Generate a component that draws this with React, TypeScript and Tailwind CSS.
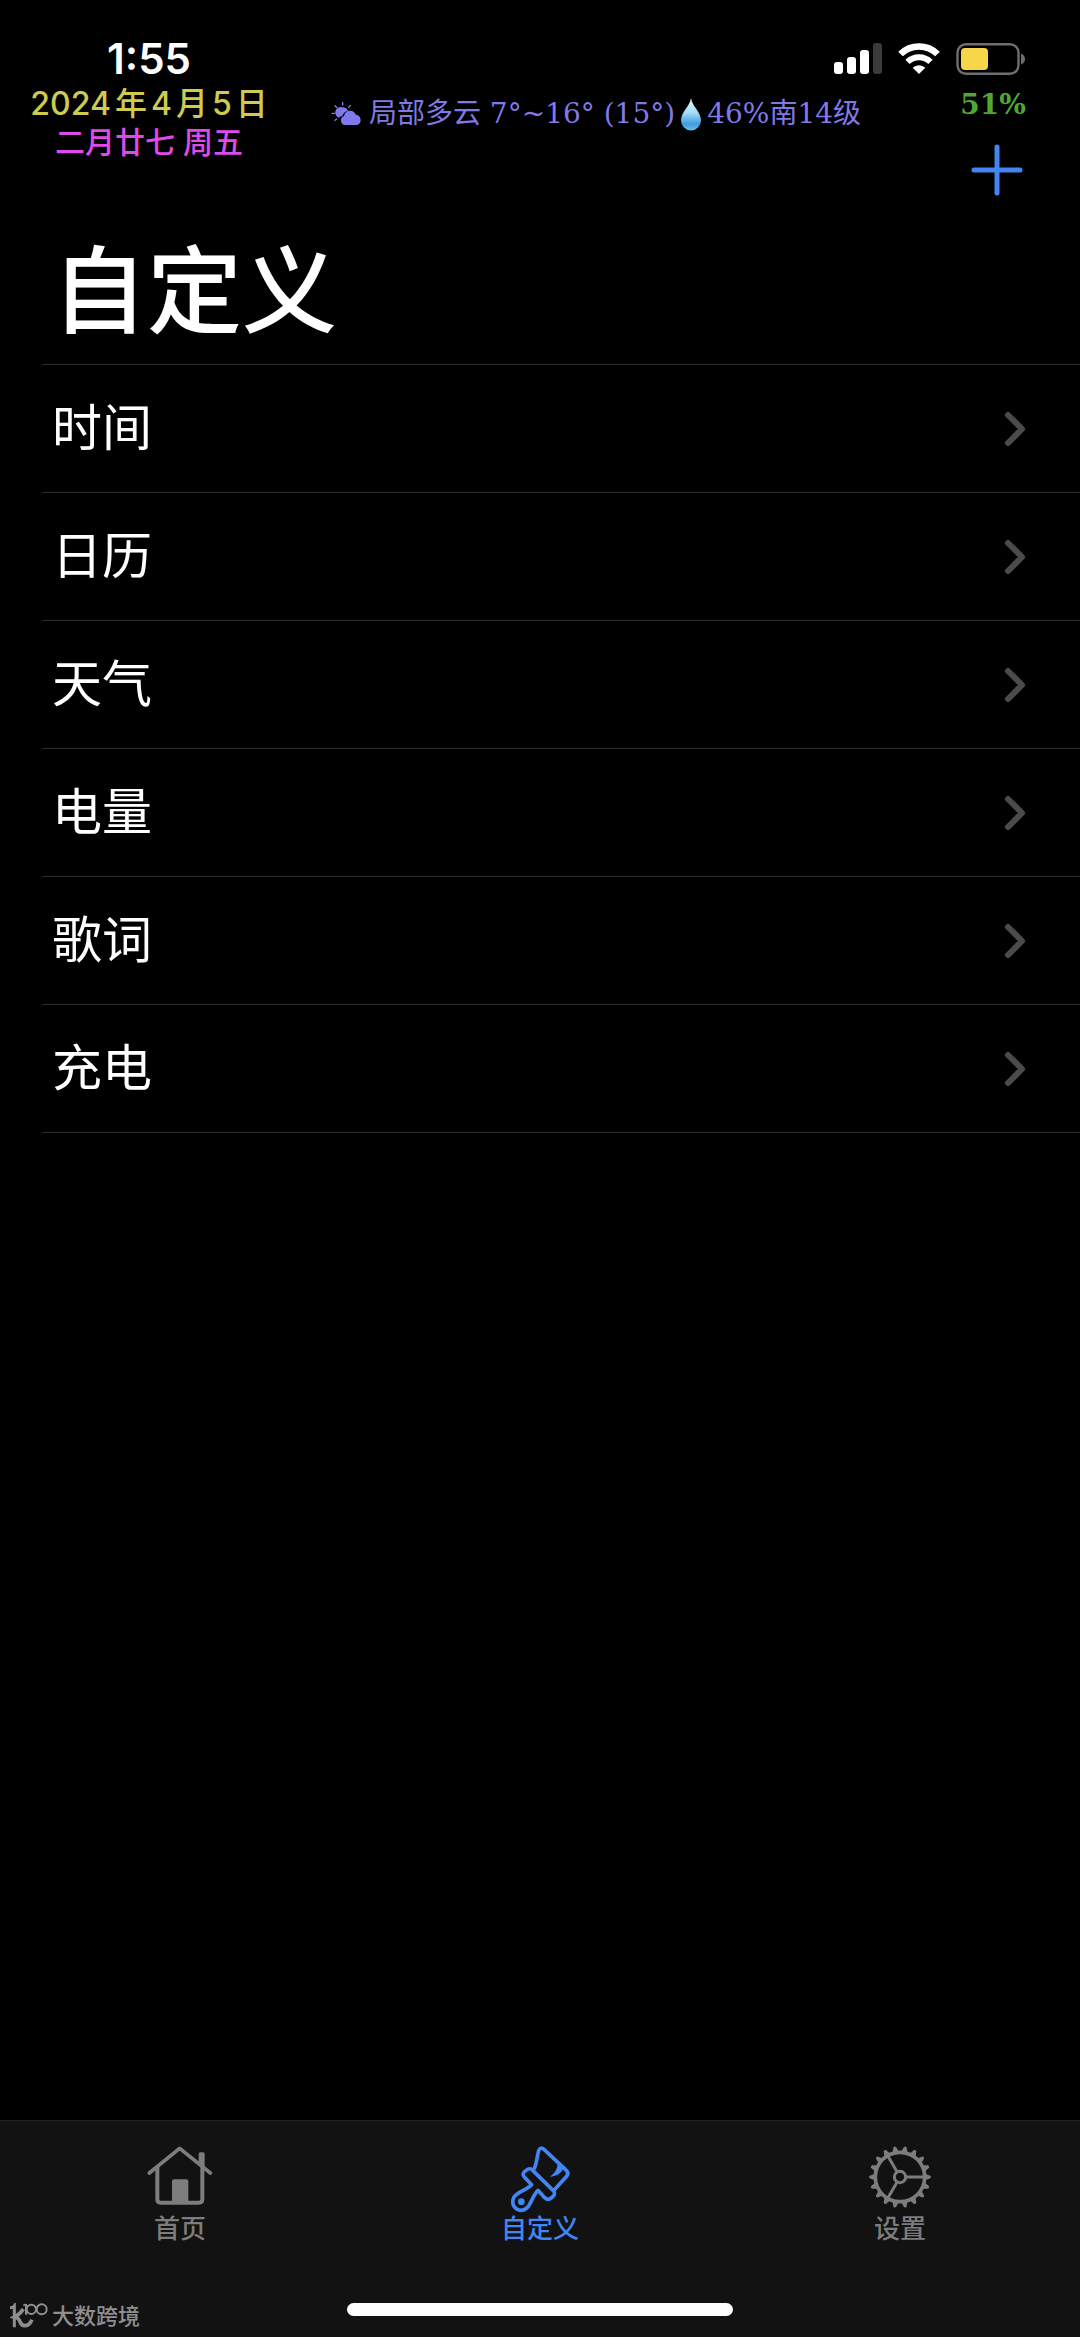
import { Fragment } from 'react'

const items = ['时间', '日历', '天气', '电量', '歌词', '充电']

const gearTeeth = Array.from({ length: 18 }, (_, i) => i * 20)

function SignalIcon() {
  return (
    <svg width="48" height="32" viewBox="0 0 48 32" aria-hidden="true">
      <rect x="0" y="19" width="9" height="12" rx="3" fill="#fff" />
      <rect x="13" y="14" width="9" height="17" rx="3" fill="#fff" />
      <rect x="26" y="7" width="9" height="24" rx="3" fill="#fff" />
      <rect x="39" y="0" width="9" height="31" rx="3" fill="#3b3b3b" />
    </svg>
  )
}

function WifiIcon() {
  return (
    <svg width="42" height="32" viewBox="0 0 42 32" fill="none" stroke="#fff" aria-hidden="true">
      <path d="M2.500 11a26.500 26.500 0 0 1 37 0" strokeWidth="6.600" />
      <path d="M9.500 18.800a16.500 16.500 0 0 1 23 0" strokeWidth="6" />
      <path d="M21 31l-6.300-6.300a9 9 0 0 1 12.600 0z" fill="#fff" stroke="none" />
    </svg>
  )
}

function BatteryIcon() {
  return (
    <svg width="69" height="32" viewBox="0 0 69 32" aria-hidden="true">
      <rect x="1.500" y="1.200" width="61" height="29.600" rx="8.500" fill="none" stroke="#6e6e6e" strokeWidth="2.400" />
      <rect x="5" y="5" width="27" height="22" rx="4" fill="#f8d64a" />
      <path d="M65 10.500q4 1.500 4 5.500t-4 5.500z" fill="#6e6e6e" />
    </svg>
  )
}

function CloudSunIcon() {
  return (
    <svg width="32" height="26" viewBox="0 0 96 78" fill="#8079f0" aria-hidden="true">
      <g stroke="#8079f0" strokeWidth="4" strokeLinecap="round">
        <path d="M35 4v8M12 14l6 6M3 37h8M12 58l5-4M58 13l-5 6" />
      </g>
      <path d="M34 19c9 0 15 4 17 10-9 2-15 8-17 16-4 1-8 2-10 5a16 16 0 0 1 10-31z" />
      <path d="M42 72a14 14 0 0 1-3-27c2-11 10-17 19-16 8 0 14 5 17 12a16 16 0 0 1 3 31z" />
    </svg>
  )
}

function DropIcon() {
  return (
    <svg width="20" height="34" viewBox="0 0 20 34" aria-hidden="true">
      <defs>
        <linearGradient id="drop" x1="0" y1="0" x2="0" y2="1">
          <stop offset="0" stopColor="#e4f8fd" />
          <stop offset="0.450" stopColor="#a3def5" />
          <stop offset="0.800" stopColor="#3f9ae0" />
          <stop offset="1" stopColor="#69c3ee" />
        </linearGradient>
      </defs>
      <path d="M10 1c1 8 10 14 10 22.500a10 10 0 0 1-20 0C0 15 9 9 10 1z" fill="url(#drop)" />
    </svg>
  )
}

function HomeIcon() {
  return (
    <svg width="66" height="62" viewBox="140 136 198 186" fill="none" stroke="currentColor" strokeLinecap="round" strokeLinejoin="round" aria-hidden="true">
      <path d="M147 220l91-74 92 74" strokeWidth="11" />
      <path d="M171 203v96q0 10 10 10h115q10 0 10-10v-96" strokeWidth="12" />
      <path d="M295 190v-27q0-5 5-5h8q5 0 5 5v44z" fill="currentColor" stroke="none" />
      <path d="M215 309v-64q0-6 6-6h37q6 0 6 6v64z" fill="currentColor" stroke="none" />
    </svg>
  )
}

function BrushIcon() {
  return (
    <svg width="66" height="68" viewBox="140 139 198 204" fill="none" stroke="currentColor" strokeWidth="11" strokeLinecap="round" strokeLinejoin="round" aria-hidden="true">
      <path d="M221 211c9-17 8-34 14-55 3-9 10-9 16-4l67 63c6 6 6 12 1 18l-38 42" />
      <path d="M217 215c-5-6-12-6-18-1-10 6-14 13-8 20l23 24c-10 14-45 21-54 39-8 19 3 37 22 38 29 0 29-39 51-60l20 22c8 8 15 6 22-1 8-6 10-13 4-20z" />
      <circle cx="183" cy="309" r="10" fill="currentColor" stroke="none" />
      <path d="M292 193c0 17-8 30-23 41 17-1 31-7 39-22z" fill="currentColor" stroke="none" />
    </svg>
  )
}

function GearIcon() {
  return (
    <svg width="66" height="64" viewBox="141 136 198 192" fill="none" stroke="currentColor" aria-hidden="true">
      <circle cx="240" cy="232" r="74" strokeWidth="11" />
      {gearTeeth.map((deg) => (
        <path key={deg} d="M315 222l16 6q4 4 0 8l-16 6z" fill="currentColor" stroke="none" transform={`rotate(${deg} 240 232)`} />
      ))}
      <circle cx="240" cy="232" r="17" strokeWidth="9" />
      {[0, 120, 240].map((deg) => (
        <path key={deg} d="M258 232h54" strokeWidth="9" transform={`rotate(${deg} 240 232)`} />
      ))}
    </svg>
  )
}

const tabs = [
  { name: '首页', icon: HomeIcon, current: false },
  { name: '自定义', icon: BrushIcon, current: true },
  { name: '设置', icon: GearIcon, current: false },
]

export default function App() {
  return (
    <div className="flex min-h-screen flex-col bg-black font-['Inter','Noto_Sans_CJK_SC',sans-serif] text-white">
      <header>
        <div className="flex h-[84px] items-center justify-between pt-[34px] pr-[55px]">
          <time className="w-[298px] text-center text-[42px] leading-[50px] font-semibold">1:55</time>
          <div className="flex items-center gap-4">
            <SignalIcon />
            <WifiIcon />
            <BatteryIcon />
          </div>
        </div>

        <div className="flex items-start">
          <div className="w-[298px] text-center leading-[39px] whitespace-nowrap">
            <p className="text-[32px] font-medium text-[#cfcb4e] [text-autospace:normal]">2024年4月5日</p>
            <p className="text-[30px] font-medium text-[#dd4be8]">二月廿七 周五</p>
          </div>
          <div className="flex flex-1 items-center justify-center gap-1.5 pr-3 font-['DejaVu_Serif','Noto_Sans_CJK_SC',serif] text-[28px] leading-[60px] whitespace-nowrap text-[#8079e6]">
            <CloudSunIcon />
            <span>局部多云 7°~16° (15°)</span>
            <DropIcon />
            <span>46%南14级</span>
          </div>
          <div className="flex w-[174px] flex-col items-center">
            <p className="font-['DejaVu_Serif',serif] text-[28px] leading-[42px] font-bold text-[#4ea832]">51%</p>
            <button type="button" aria-label="添加" className="mt-[18px] ml-2 text-[#4285f4]">
              <svg width="52" height="52" viewBox="0 0 52 52" stroke="currentColor" strokeWidth="5" strokeLinecap="round" aria-hidden="true">
                <path d="M26 3v46M3 26h46" />
              </svg>
            </button>
          </div>
        </div>
      </header>

      <main className="flex-1">
        <h1 className="px-[52px] pt-[46px] pb-[22px] text-[95px] leading-[100px] font-medium">自定义</h1>
        <ul className="ml-[42px] border-t border-[#2c2c2c]">
          {items.map((item) => (
            <li key={item} className="border-b border-[#2c2c2c]">
              <button type="button" className="flex h-[127px] w-full items-center justify-between pr-[54px] pl-[10px] text-[50px]">
                {item}
                <svg width="22" height="36" viewBox="0 0 22 36" fill="none" stroke="#4b4b4b" strokeWidth="6" strokeLinecap="round" strokeLinejoin="round" aria-hidden="true">
                  <path d="M4 4l14 14L4 32" />
                </svg>
              </button>
            </li>
          ))}
        </ul>
      </main>

      <footer className="border-t border-[#232323] bg-[#121212]">
        <nav className="grid h-[146px] grid-cols-3">
          {tabs.map((tab) => (
            <Fragment key={tab.name}>
              <a
                href="#"
                aria-current={tab.current ? 'page' : undefined}
                className={tab.current ? 'flex flex-col items-center pt-6 text-[#4285f4]' : 'flex flex-col items-center pt-6 text-[#7d7d7d]'}
              >
                <span className="flex h-[68px] items-start">
                  <tab.icon />
                </span>
                <span className="text-[26px] leading-[32px] font-medium">{tab.name}</span>
              </a>
            </Fragment>
          ))}
        </nav>
        <div className="grid h-[70px] grid-cols-3 items-start px-[10px] pt-8">
          <div className="flex items-center gap-1 pt-1 text-[22px] leading-none font-medium text-[#8f8f8f]">
            <svg width="38" height="26" viewBox="0 0 114 78" fill="none" stroke="currentColor" aria-hidden="true">
              <path d="M0 14q10 0 13-5v64" strokeWidth="9" />
              <path d="M40 18Q30 34 14 42q12 2 16 14t14 12q14 0 22-18" strokeWidth="11" />
              <path d="M40 6q7 0 8-3v32" strokeWidth="6" />
              <circle cx="64" cy="19" r="14" strokeWidth="6" />
              <circle cx="95" cy="19" r="15" strokeWidth="6" />
            </svg>
            <span>大数跨境</span>
          </div>
          <div className="mt-1 h-[13px] w-[386px] justify-self-center rounded-full bg-white" />
        </div>
      </footer>
    </div>
  )
}
